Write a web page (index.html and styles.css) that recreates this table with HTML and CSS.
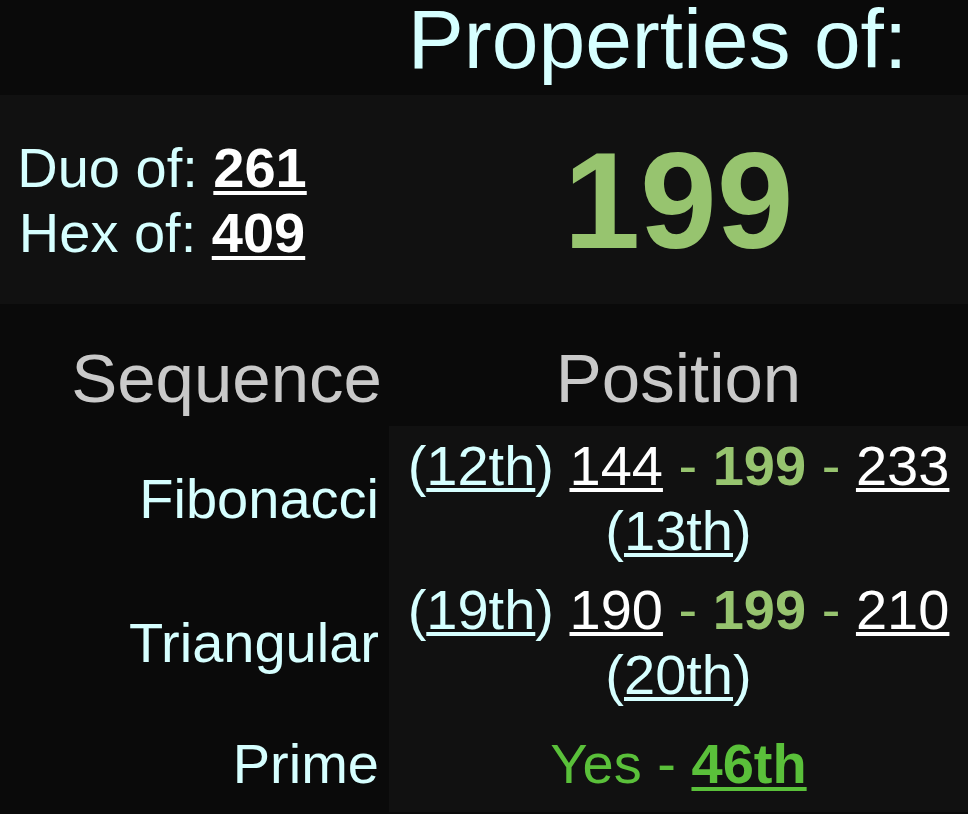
FILE: index.html
```html
<!DOCTYPE html>
<html lang="en">
<head>
<meta charset="utf-8">
<title>Properties of 199</title>
<link rel="stylesheet" href="styles.css">
</head>
<body>
<main class="props">
  <div class="row title-row">
    <div class="spacer"></div>
    <h1 class="title">Properties of:</h1>
  </div>
  <div class="row hero-row">
    <div class="aliases">
      <div class="alias">Duo of: <a class="alias-link" href="#">261</a></div>
      <div class="alias">Hex of: <a class="alias-link" href="#">409</a></div>
    </div>
    <div class="number">199</div>
  </div>
  <div class="row seq-head">
    <div class="th th-left">Sequence</div>
    <div class="th th-right">Position</div>
  </div>
  <div class="row seq-row">
    <div class="label">Fibonacci</div>
    <div class="pos"><span class="ord">(<a class="ord-link" href="#">12th</a>)</span> <a class="val" href="#">144</a> <span class="cur">- <b>199</b> -</span> <a class="val" href="#">233</a> <span class="ord">(<a class="ord-link" href="#">13th</a>)</span></div>
  </div>
  <div class="row seq-row">
    <div class="label">Triangular</div>
    <div class="pos"><span class="ord">(<a class="ord-link" href="#">19th</a>)</span> <a class="val" href="#">190</a> <span class="cur">- <b>199</b> -</span> <a class="val" href="#">210</a> <span class="ord">(<a class="ord-link" href="#">20th</a>)</span></div>
  </div>
  <div class="row seq-row prime-row">
    <div class="label">Prime</div>
    <div class="pos"><span class="yes">Yes - <a class="prime-link" href="#">46th</a></span></div>
  </div>
</main>
</body>
</html>
```

FILE: styles.css
```css
html, body {
  margin: 0;
  padding: 0;
  background: #0a0a0a;
}

body {
  min-height: 814px;
  font-family: "Liberation Sans", Arial, sans-serif;
  font-size: 56px;
  line-height: 65px;
  color: #d6ffff;
}

.props {
  display: flex;
  flex-direction: column;
}

.row {
  display: grid;
  grid-template-columns: 389px 1fr;
}

/* Title */
.title-row {
  background: #0a0a0a;
}

.title {
  margin: 0;
  font-size: 84px;
  font-weight: normal;
  line-height: 79px;
  padding: 0 42px 16px 0;
  text-align: center;
  color: #d6ffff;
}

/* Hero */
.hero-row {
  background: #111111;
  align-items: center;
  padding: 21px 0;
}

.aliases {
  text-align: center;
  padding-right: 65px;
}

.alias-link {
  color: #ffffff;
  font-weight: bold;
  text-decoration: underline;
  text-decoration-thickness: 4px;
  text-underline-offset: 4px;
}

.number {
  text-align: center;
  font-size: 138px;
  line-height: 166px;
  font-weight: bold;
  color: #97c46f;
  padding: 1px 0 0;
}

/* Sequence table */
.seq-head {
  background: #0a0a0a;
}

.th {
  font-size: 69px;
  line-height: 80px;
  color: #c9c9c9;
  padding: 35px 0 7px;
}

.th-left {
  text-align: right;
  padding-right: 7px;
}

.th-right {
  text-align: center;
}

.label {
  align-self: center;
  text-align: right;
  padding-right: 10px;
  color: #d6ffff;
}

.pos {
  background: #111111;
  text-align: center;
  padding: 7px 8px;
}

.prime-row .pos {
  padding-top: 17px;
  padding-bottom: 16px;
}

.prime-row .label {
  align-self: end;
  padding-bottom: 16px;
}

.ord {
  color: #d6ffff;
}

.ord-link {
  color: #d6ffff;
  text-decoration: underline;
  text-decoration-thickness: 4px;
  text-underline-offset: 3px;
}

.val {
  color: #ffffff;
  text-decoration: underline;
  text-decoration-thickness: 4px;
  text-underline-offset: 3px;
}

.cur {
  color: #97c46f;
}

.cur b {
  font-weight: bold;
}

.yes {
  color: #5ac03a;
}

.prime-link {
  color: #5ac03a;
  font-weight: bold;
  text-decoration: underline;
  text-decoration-thickness: 4px;
  text-underline-offset: 4px;
}
```
